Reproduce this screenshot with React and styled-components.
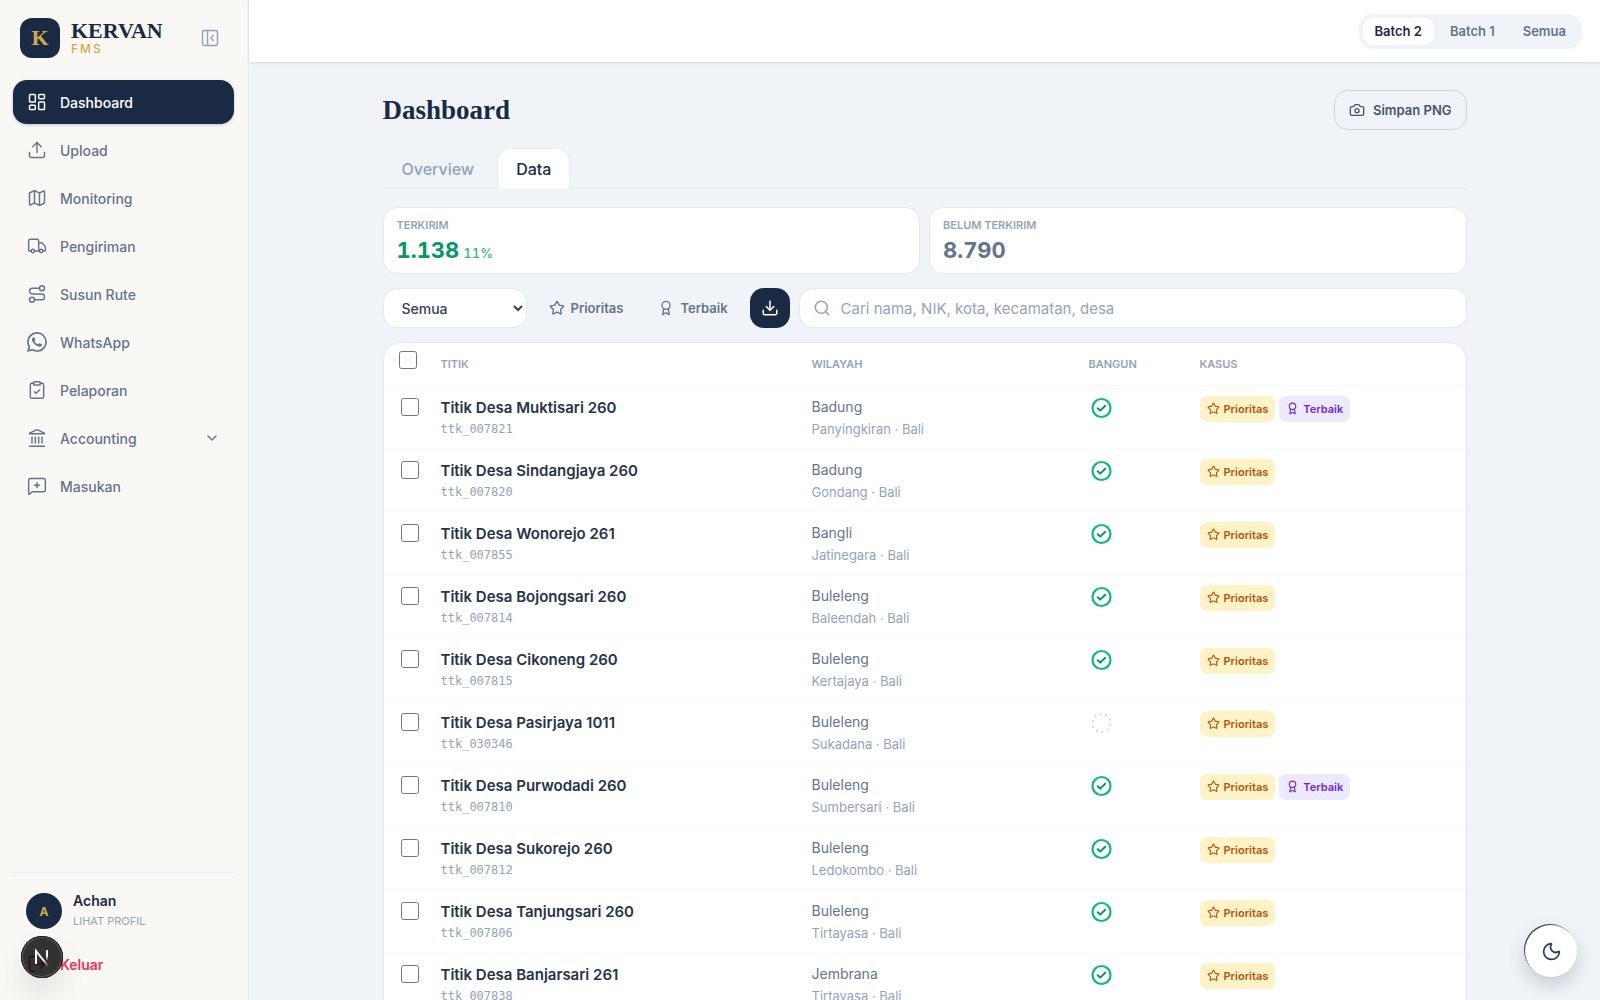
import React, { useState } from "react";
import styled, { createGlobalStyle } from "styled-components";
import {
  Award,
  Camera,
  ChevronDown,
  ClipboardCheck,
  Download,
  Landmark,
  LayoutDashboard,
  LogOut,
  Map,
  MessageSquarePlus,
  Moon,
  PanelLeftClose,
  Route,
  Search,
  Star,
  Truck,
  Upload
} from "lucide-react";
import { BsWhatsapp } from "react-icons/bs";

const sans = `Inter, "Liberation Sans", sans-serif`;
const serif = `"Liberation Serif", serif`;
const mono = `"DejaVu Sans Mono", "Liberation Mono", monospace`;

const GlobalStyle = createGlobalStyle`
  * {
    box-sizing: border-box;
  }

  body {
    margin: 0;
    background: #f0f4f8;
    color: #1a2a44;
    font-family: ${sans};
    font-size: 14px;
  }

  button, input, select {
    font-family: inherit;
  }

  button {
    border: 0;
    background: none;
    cursor: pointer;
  }
`;

const Layout = styled.div`
  display: flex;
  height: 100vh;
  overflow: hidden;
`;

const Sidebar = styled.aside`
  display: flex;
  flex-direction: column;
  flex: none;
  width: 249px;
  padding: 18px 14px 18px 13px;
  background: #f9f8f4;
  border-right: 1px solid #e8edf2;
`;

const Brand = styled.div`
  display: flex;
  align-items: center;
  gap: 11px;
  padding: 0 14px 0 7px;
`;

const BrandMark = styled.div`
  display: grid;
  place-items: center;
  width: 40px;
  height: 40px;
  border-radius: 12px;
  background: #1a2a44;
  color: #d0a94a;
  font: bold 22px/40px ${serif};
`;

const BrandText = styled.div`
  flex: 1;
`;

const BrandName = styled.div`
  color: #1a2a44;
  font: bold 22px/22px ${serif};
`;

const BrandSub = styled.div`
  color: #d0a94a;
  font-size: 12px;
  font-weight: 500;
  line-height: 14px;
  letter-spacing: 2px;
`;

const CollapseButton = styled.button`
  display: flex;
  padding: 0;
  color: #94a3b8;
`;

const Nav = styled.nav`
  display: flex;
  flex-direction: column;
  gap: 4px;
  margin-top: 22px;
`;

const NavLink = styled.a`
  display: flex;
  align-items: center;
  gap: 13px;
  height: 44px;
  padding: 0 14px;
  border-radius: 14px;
  background: ${({ $active }) => ($active ? "#1a2a44" : "transparent")};
  box-shadow: ${({ $active }) =>
    $active ? "0 1px 3px rgba(26, 42, 68, 0.25)" : "none"};
  color: ${({ $active }) => ($active ? "#ffffff" : "#64748b")};
  font-size: 14px;
  font-weight: 500;
  text-decoration: none;
`;

const NavLabel = styled.span`
  flex: 1;
`;

const SidebarFooter = styled.div`
  margin-top: auto;
  border-top: 1px solid #eceff3;
`;

const Profile = styled.a`
  display: flex;
  align-items: center;
  gap: 11px;
  padding: 18px 13px 0;
  color: #1a2a44;
  text-decoration: none;
`;

const Avatar = styled.span`
  display: grid;
  place-items: center;
  width: 36px;
  height: 36px;
  border-radius: 50%;
  background: #1a2a44;
  color: #d0a94a;
  font-size: 12px;
  font-weight: 700;
`;

const ProfileName = styled.div`
  font-size: 14px;
  font-weight: 600;
  line-height: 20px;
`;

const ProfileHint = styled.div`
  color: #94a3b8;
  font-size: 11px;
  line-height: 20px;
`;

const LogoutButton = styled.button`
  display: flex;
  align-items: center;
  gap: 13px;
  height: 36px;
  margin-top: 15px;
  padding: 0 14px;
  color: #e8365d;
  font-size: 14px;
  font-weight: 600;
`;

const Main = styled.div`
  display: flex;
  flex-direction: column;
  flex: 1;
  min-width: 0;
`;

const TopBar = styled.header`
  display: flex;
  align-items: center;
  justify-content: flex-end;
  flex: none;
  height: 62px;
  padding: 0 18px;
  background: #ffffff;
  box-shadow: 0 1px 3px rgba(26, 42, 68, 0.14);
`;

const Segmented = styled.div`
  display: flex;
  gap: 4px;
  padding: 4px;
  border-radius: 14px;
  background: #f0f4f8;
`;

const Segment = styled.button`
  height: 27px;
  padding: 0 12px;
  border-radius: 10px;
  background: ${({ $active }) => ($active ? "#ffffff" : "transparent")};
  color: ${({ $active }) => ($active ? "#1a2a44" : "#64748b")};
  font-size: 13px;
  font-weight: 600;
`;

const Content = styled.main`
  width: 100%;
  max-width: 1084px;
  margin: 0 auto;
  padding-top: 28px;
`;

const TitleRow = styled.div`
  display: flex;
  align-items: center;
  justify-content: space-between;
`;

const Title = styled.h1`
  margin: 0;
  font: bold 27px/40px ${serif};
`;

const OutlineButton = styled.button`
  display: flex;
  align-items: center;
  gap: 8px;
  height: 40px;
  padding: 0 14px;
  border: 1px solid #ccd3de;
  border-radius: 14px;
  color: #475569;
  font-size: 13px;
  font-weight: 600;
`;

const Tabs = styled.div`
  display: flex;
  gap: 4px;
  margin-top: 18px;
  border-bottom: 1px solid #e4e9ef;
`;

const Tab = styled.button`
  height: 41px;
  margin-bottom: -1px;
  padding: 0 18px;
  border: 1px solid ${({ $active }) => ($active ? "#e8edf2" : "transparent")};
  border-bottom: 0;
  border-radius: 14px 14px 0 0;
  background: ${({ $active }) => ($active ? "#ffffff" : "transparent")};
  color: ${({ $active }) => ($active ? "#1a2a44" : "#94a3b8")};
  font-size: 16px;
  font-weight: 500;
`;

const Stats = styled.div`
  display: grid;
  grid-template-columns: 1fr 1fr;
  gap: 9px;
  margin-top: 18px;
`;

const StatCard = styled.div`
  padding: 8px 13px 7px;
  border: 1px solid #e4e9ef;
  border-radius: 14px;
  background: #ffffff;
`;

const StatLabel = styled.div`
  color: #94a3b8;
  font-size: 11px;
  font-weight: 600;
  line-height: 18px;
  text-transform: uppercase;
`;

const StatValue = styled.div`
  display: flex;
  align-items: baseline;
  gap: 4px;
  height: 32px;
  color: ${({ $color }) => $color};
  font-size: 22px;
  font-weight: 700;
  font-variant-numeric: tabular-nums;
  line-height: 32px;
`;

const StatShare = styled.span`
  color: #3bb488;
  font-size: 13px;
  font-weight: 500;
`;

const Filters = styled.div`
  display: flex;
  align-items: center;
  gap: 9px;
  margin-top: 14px;
`;

const Select = styled.select`
  width: 144px;
  height: 40px;
  padding: 0 0 0 14px;
  border: 1px solid #e4e9ef;
  border-radius: 14px;
  background: #ffffff;
  color: #334155;
  font-size: 14px;
  font-weight: 500;
`;

const FilterButton = styled.button`
  display: flex;
  align-items: center;
  gap: 6px;
  height: 40px;
  padding: 0 13px;
  color: #64748b;
  font-size: 13px;
  font-weight: 600;
`;

const DownloadButton = styled.button`
  display: grid;
  place-items: center;
  width: 40px;
  height: 40px;
  padding: 0;
  border-radius: 14px;
  background: #1a2a44;
  color: #ffffff;
`;

const SearchBox = styled.label`
  display: flex;
  align-items: center;
  flex: 1;
  gap: 8px;
  height: 40px;
  padding: 0 13px;
  border: 1px solid #e4e9ef;
  border-radius: 14px;
  background: #ffffff;
  color: #94a3b8;
`;

const SearchInput = styled.input`
  flex: 1;
  border: 0;
  outline: 0;
  background: none;
  color: #1a2a44;
  font-size: 15px;

  &::placeholder {
    color: #94a3b8;
  }
`;

const TableCard = styled.div`
  margin-top: 14px;
  border: 1px solid #e4e9ef;
  border-radius: 18px;
  background: #ffffff;
`;

const Table = styled.table`
  width: 100%;
  border-collapse: collapse;
  table-layout: fixed;
`;

const Col = styled.col`
  width: ${({ $width }) => $width};
`;

const Th = styled.th`
  height: 42px;
  padding: 0 10px;
  border-bottom: 1px solid #f6f8fa;
  color: #94a3b8;
  font-size: 11px;
  font-weight: 600;
  text-align: left;
  text-transform: uppercase;
`;

const CheckTh = styled(Th)`
  padding: 8px 0 0 15px;
  vertical-align: top;
`;

const Td = styled.td`
  padding: 10px 10px 8px;
  border-bottom: 1px solid #f9fafc;
  vertical-align: top;
`;

const CheckTd = styled(Td)`
  padding: 12px 0 0 17px;
`;

const Checkbox = styled.input`
  display: block;
  width: 18px;
  height: 18px;
  margin: 0;
`;

const PointName = styled.div`
  color: #263348;
  font-size: 15px;
  font-weight: 600;
  line-height: 24px;
`;

const PointId = styled.div`
  color: #94a3b8;
  font-family: ${mono};
  font-size: 12px;
  line-height: 18px;
`;

const City = styled.div`
  color: #64748b;
  font-size: 14px;
  line-height: 22px;
`;

const Village = styled.div`
  color: #94a3b8;
  font-size: 13px;
  line-height: 22px;
`;

const StatusIcon = styled.svg`
  display: block;
  width: 24px;
  height: 24px;
  fill: none;
  stroke-linecap: round;
  stroke-linejoin: round;
`;

const Badges = styled.div`
  display: flex;
  gap: 4px;
`;

const Badge = styled.span`
  display: flex;
  align-items: center;
  gap: 4px;
  height: 26px;
  padding: 0 7px;
  border-radius: 7px;
  background: ${({ $best }) => ($best ? "#ede9fe" : "#fef3c7")};
  color: ${({ $best }) => ($best ? "#6d28d9" : "#b45309")};
  font-size: 11px;
  font-weight: 600;
`;

const DevBadge = styled.button`
  position: fixed;
  bottom: 22px;
  left: 21px;
  display: grid;
  place-items: center;
  width: 42px;
  height: 42px;
  padding: 0;
  border-radius: 50%;
  background: rgba(0, 0, 0, 0.8);
  box-shadow: inset 0 0 0 1px #171717, inset 0 0 0 2px #5a5a5a,
    0 16px 32px -8px rgba(0, 0, 0, 0.24);
`;

const ThemeToggle = styled.button`
  position: fixed;
  right: 23px;
  bottom: 23px;
  display: grid;
  place-items: center;
  width: 52px;
  height: 52px;
  padding: 0;
  border-radius: 50%;
  background: #ffffff;
  box-shadow: -1px -1px 0 #3a4558, 0 8px 18px rgba(26, 42, 68, 0.2);
  color: #334155;
`;

const navItems = [
  { label: "Dashboard", icon: LayoutDashboard },
  { label: "Upload", icon: Upload },
  { label: "Monitoring", icon: Map },
  { label: "Pengiriman", icon: Truck },
  { label: "Susun Rute", icon: Route },
  { label: "WhatsApp", icon: BsWhatsapp, brand: true },
  { label: "Pelaporan", icon: ClipboardCheck },
  { label: "Accounting", icon: Landmark, nested: true },
  { label: "Masukan", icon: MessageSquarePlus }
];

const batches = ["Batch 2", "Batch 1", "Semua"];

const points = [
  ["Titik Desa Muktisari 260", "ttk_007821", "Badung", "Panyingkiran", true, true],
  ["Titik Desa Sindangjaya 260", "ttk_007820", "Badung", "Gondang", true],
  ["Titik Desa Wonorejo 261", "ttk_007855", "Bangli", "Jatinegara", true],
  ["Titik Desa Bojongsari 260", "ttk_007814", "Buleleng", "Baleendah", true],
  ["Titik Desa Cikoneng 260", "ttk_007815", "Buleleng", "Kertajaya", true],
  ["Titik Desa Pasirjaya 1011", "ttk_030346", "Buleleng", "Sukadana", false],
  ["Titik Desa Purwodadi 260", "ttk_007810", "Buleleng", "Sumbersari", true, true],
  ["Titik Desa Sukorejo 260", "ttk_007812", "Buleleng", "Ledokombo", true],
  ["Titik Desa Tanjungsari 260", "ttk_007806", "Buleleng", "Tirtayasa", true],
  ["Titik Desa Banjarsari 261", "ttk_007838", "Jembrana", "Tirtayasa", true]
].map(([name, id, city, village, built, best]) => ({
  name,
  id,
  city,
  village,
  built,
  best
}));

const BuiltStatus = ({ built }) =>
  built ? (
    <StatusIcon viewBox="0 0 24 24" role="img" aria-label="Sudah dibangun">
      <circle cx="12.5" cy="12" r="9" stroke="#10b981" strokeWidth="2.2" />
      <path d="m8.7 12.3 2.5 2.3 5-4.8" stroke="#059669" strokeWidth="2" />
    </StatusIcon>
  ) : (
    <StatusIcon viewBox="0 0 24 24" role="img" aria-label="Belum dibangun">
      <circle
        cx="12.5"
        cy="12"
        r="9"
        pathLength="100"
        stroke="#cbd5e1"
        strokeWidth="2.2"
        strokeDasharray="0 10"
        transform="rotate(12 12.5 12)"
      />
    </StatusIcon>
  );

const PointRow = ({ point, checked, onToggle }) => (
  <tr>
    <CheckTd>
      <Checkbox
        type="checkbox"
        aria-label={point.name}
        checked={checked}
        onChange={onToggle}
      />
    </CheckTd>
    <Td>
      <PointName>{point.name}</PointName>
      <PointId>{point.id}</PointId>
    </Td>
    <Td>
      <City>{point.city}</City>
      <Village>{point.village} · Bali</Village>
    </Td>
    <Td>
      <BuiltStatus built={point.built} />
    </Td>
    <Td>
      <Badges>
        <Badge>
          <Star size={13} />
          Prioritas
        </Badge>
        {point.best && (
          <Badge $best>
            <Award size={13} />
            Terbaik
          </Badge>
        )}
      </Badges>
    </Td>
  </tr>
);

const App = () => {
  const [page, setPage] = useState("Dashboard");
  const [batch, setBatch] = useState("Batch 2");
  const [tab, setTab] = useState("Data");
  const [query, setQuery] = useState("");
  const [selected, setSelected] = useState([]);

  const allSelected = selected.length === points.length;
  const toggleAll = () => setSelected(allSelected ? [] : points.map(p => p.id));
  const toggle = id =>
    setSelected(
      selected.includes(id) ? selected.filter(s => s !== id) : [...selected, id]
    );

  const visible = points.filter(p =>
    `${p.name} ${p.city} ${p.village}`.toLowerCase().includes(query.toLowerCase())
  );

  return (
    <Layout>
      <GlobalStyle />
      <Sidebar>
        <Brand>
          <BrandMark>K</BrandMark>
          <BrandText>
            <BrandName>KERVAN</BrandName>
            <BrandSub>FMS</BrandSub>
          </BrandText>
          <CollapseButton aria-label="Tutup menu">
            <PanelLeftClose size={20} strokeWidth={1.75} />
          </CollapseButton>
        </Brand>
        <Nav>
          {navItems.map(({ label, icon: Icon, brand, nested }) => (
            <NavLink
              key={label}
              href="#"
              $active={page === label}
              onClick={() => setPage(label)}
            >
              {brand ? <Icon size={20} /> : <Icon size={20} strokeWidth={1.75} />}
              <NavLabel>{label}</NavLabel>
              {nested && <ChevronDown size={16} />}
            </NavLink>
          ))}
        </Nav>
        <SidebarFooter>
          <Profile href="#">
            <Avatar>A</Avatar>
            <div>
              <ProfileName>Achan</ProfileName>
              <ProfileHint>LIHAT PROFIL</ProfileHint>
            </div>
          </Profile>
          <LogoutButton>
            <LogOut size={20} strokeWidth={1.75} />
            Keluar
          </LogoutButton>
        </SidebarFooter>
      </Sidebar>

      <Main>
        <TopBar>
          <Segmented>
            {batches.map(name => (
              <Segment
                key={name}
                $active={batch === name}
                onClick={() => setBatch(name)}
              >
                {name}
              </Segment>
            ))}
          </Segmented>
        </TopBar>
        <Content>
          <TitleRow>
            <Title>Dashboard</Title>
            <OutlineButton>
              <Camera size={16} />
              Simpan PNG
            </OutlineButton>
          </TitleRow>
          <Tabs>
            {["Overview", "Data"].map(name => (
              <Tab key={name} $active={tab === name} onClick={() => setTab(name)}>
                {name}
              </Tab>
            ))}
          </Tabs>
          <Stats>
            <StatCard>
              <StatLabel>Terkirim</StatLabel>
              <StatValue $color="#059669">
                1.138
                <StatShare>11%</StatShare>
              </StatValue>
            </StatCard>
            <StatCard>
              <StatLabel>Belum terkirim</StatLabel>
              <StatValue $color="#64748b">8.790</StatValue>
            </StatCard>
          </Stats>
          <Filters>
            <Select aria-label="Status" defaultValue="Semua">
              <option>Semua</option>
              <option>Terkirim</option>
              <option>Belum terkirim</option>
            </Select>
            <FilterButton>
              <Star size={16} />
              Prioritas
            </FilterButton>
            <FilterButton>
              <Award size={16} />
              Terbaik
            </FilterButton>
            <DownloadButton aria-label="Unduh">
              <Download size={18} />
            </DownloadButton>
            <SearchBox>
              <Search size={18} />
              <SearchInput
                aria-label="Cari"
                placeholder="Cari nama, NIK, kota, kecamatan, desa"
                value={query}
                onChange={({ target }) => setQuery(target.value)}
              />
            </SearchBox>
          </Filters>
          <TableCard>
            <Table>
              <colgroup>
                <Col $width="47px" />
                <Col />
                <Col $width="277px" />
                <Col $width="111px" />
                <Col $width="276px" />
              </colgroup>
              <thead>
                <tr>
                  <CheckTh>
                    <Checkbox
                      type="checkbox"
                      aria-label="Pilih semua"
                      checked={allSelected}
                      onChange={toggleAll}
                    />
                  </CheckTh>
                  <Th>Titik</Th>
                  <Th>Wilayah</Th>
                  <Th>Bangun</Th>
                  <Th>Kasus</Th>
                </tr>
              </thead>
              <tbody>
                {visible.map(point => (
                  <PointRow
                    key={point.id}
                    point={point}
                    checked={selected.includes(point.id)}
                    onToggle={() => toggle(point.id)}
                  />
                ))}
              </tbody>
            </Table>
          </TableCard>
        </Content>
      </Main>

      <DevBadge aria-label="Dev tools">
        <svg width="42" height="42" viewBox="0 0 42 42" fill="none">
          <defs>
            <linearGradient id="stem" x1="0" y1="14" x2="0" y2="25" gradientUnits="userSpaceOnUse">
              <stop offset="0.5" stopColor="#fff" />
              <stop offset="1" stopColor="#fff" stopOpacity="0" />
            </linearGradient>
            <linearGradient id="slash" x1="15" y1="15" x2="27" y2="30" gradientUnits="userSpaceOnUse">
              <stop offset="0.6" stopColor="#fff" />
              <stop offset="1" stopColor="#fff" stopOpacity="0.1" />
            </linearGradient>
          </defs>
          <path d="M15 28V15l12 15" stroke="url(#slash)" strokeWidth="2" />
          <path d="M26 14v12" stroke="url(#stem)" strokeWidth="2" />
        </svg>
      </DevBadge>
      <ThemeToggle aria-label="Mode gelap">
        <Moon size={21} />
      </ThemeToggle>
    </Layout>
  );
};

export default App;
